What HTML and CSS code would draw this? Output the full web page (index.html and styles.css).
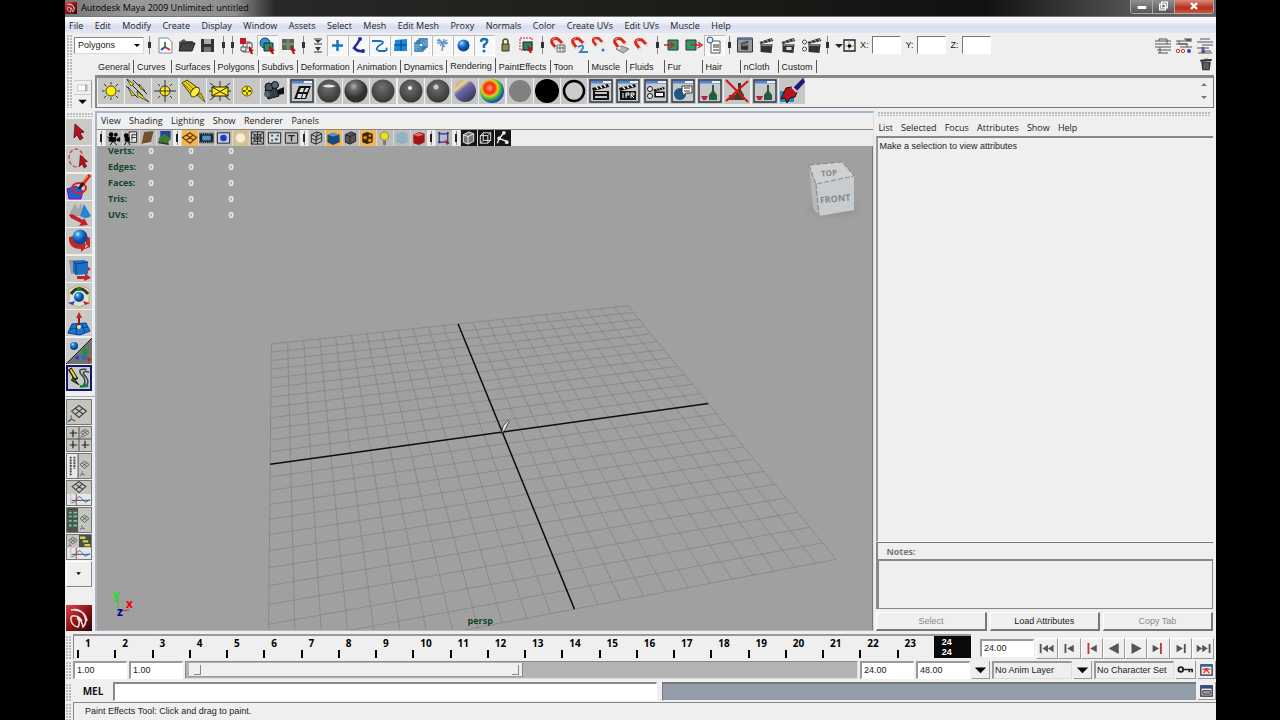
FILE: index.html
```html
<!DOCTYPE html>
<html lang="en">
<head>
<meta charset="utf-8">
<title>Autodesk Maya 2009 Unlimited: untitled</title>
<link rel="stylesheet" href="styles.css">
</head>
<body>
<svg class="defs" aria-hidden="true">
  <defs>
    <radialGradient id="gray" cx=".4" cy=".3"><stop offset="0" stop-color="#b5b5b5"/><stop offset=".35" stop-color="#6c6c6c"/><stop offset="1" stop-color="#303030"/></radialGradient>
    <radialGradient id="flat" cx=".45" cy=".35" r=".6"><stop offset="0" stop-color="#707070"/><stop offset="1" stop-color="#3a3a3a"/></radialGradient>
    <radialGradient id="blue" cx=".35" cy=".3"><stop offset="0" stop-color="#d8f2ff"/><stop offset=".35" stop-color="#3596e6"/><stop offset="1" stop-color="#084a98"/></radialGradient>
    <radialGradient id="rain" cx=".4" cy=".38" r=".62"><stop offset="0" stop-color="#ff9a5a"/><stop offset=".35" stop-color="#f02a1e"/><stop offset=".55" stop-color="#eacb1d"/><stop offset=".75" stop-color="#2bb741"/><stop offset="1" stop-color="#2238c8"/></radialGradient>
    <linearGradient id="ramp" x2=".8" y2="1"><stop offset="0" stop-color="#b75a5c"/><stop offset=".3" stop-color="#ead98c"/><stop offset=".45" stop-color="#6c6aa8"/><stop offset="1" stop-color="#30304e"/></linearGradient>
    <linearGradient id="maya" x2="1" y2="1"><stop offset="0" stop-color="#e0464b"/><stop offset=".5" stop-color="#8c1416"/><stop offset="1" stop-color="#2a0505"/></linearGradient>
  </defs>
  <symbol id="win" viewBox="0 0 26 26"><path d="M2 2h22v22H2z" fill="#c9c9c9" stroke="#2d3440" stroke-width="1.4"/><path d="M3 3h20v2.5H3z" fill="#4f86d8"/><path d="M15 3h8v2H15z" fill="#e6f0ff"/></symbol>
  <symbol id="clap" viewBox="0 0 26 26"><path d="M5 13h16v9H5zM4 10l16-4 1 3-16 4z" fill="#111"/><path d="M8 9l2 2M12 8l2 2M16 7l2 2" stroke="#fff" stroke-width="1.3"/></symbol>
  <symbol id="board" viewBox="0 0 21 21"><path d="M4 9h12l-1 9-11-1zM3 7l12-4 2 3L4 9z" fill="#333"/><path d="M6 6l2 2M10 5l2 2M14 4l1 2M5 10h10" stroke="#c4c4c4"/></symbol>
  <symbol id="magnet" viewBox="0 0 21 21"><path d="M8 13L4 8q-1-3 1-4t5 0l5 5" fill="none" stroke="#d92818" stroke-width="3"/><path d="M7 12l2 2M14 8l2 2" stroke="#e4e4e4" stroke-width="3"/><path d="M4 5l3-2" stroke="#ff9a80"/></symbol>
  <symbol id="grid3" viewBox="0 0 26 26"><path d="M5 12l8-6 8 6-8 7zM9 9l8 6M17 9l-8 6.500" fill="none" stroke="#3b3b33" stroke-width="1.200"/></symbol>
  <symbol id="axis" viewBox="0 0 10 10"><path d="M4 6V1" stroke="#2aa52a" stroke-width="1.500"/><path d="M4 6L0 9" stroke="#2346d0" stroke-width="1.500"/><path d="M4 6l5 2" stroke="#d02020" stroke-width="1.500"/></symbol>
  <symbol id="cube" viewBox="0 0 17 17"><path d="M3 5l6-3 5 2v8l-6 3-5-2zM3 5l5 2 6-3M8 7v8" fill="none" stroke="currentColor"/></symbol>
  <symbol id="cursor" viewBox="0 0 26 26"><path d="M9 5l9 8-4 1 3 5-3 2-3-5-3 3z" fill="#b3131a" stroke="#5d0a0d" stroke-width=".8"/></symbol>
  <symbol id="logo" viewBox="0 0 26 26"><path d="M0 0h26v26H0z" fill="url(#maya)"/><path d="M5 5q9-2 13 5 4 7-1 12-1-7-6-9 4 4 1 9-6-1-7-7-1-5 4-4 4 0 7 5M8 5q11 0 13 11" fill="none" stroke="#f5dcdc" stroke-width="1.500"/></symbol>
  <symbol id="curve" viewBox="0 0 26 12"><path d="M0 0h26v12H0z" fill="#e4e6ea"/><path d="M4 1v10" stroke="#888" stroke-dasharray="1 1"/><path d="M5 7h20" stroke="#444"/><path d="M10 0v12" stroke="#d22"/><path d="M5 10q4-1 6-5t5 0 4 4 5-3" fill="none" stroke="#3a6aa8"/></symbol>
</svg>

<div class="app">
  <header class="titlebar">
    <svg class="titlebar-logo"><use href="#logo"/></svg>
    <h1 class="titlebar-text">Autodesk Maya 2009 Unlimited: untitled</h1>
    <div class="winbtns">
      <button class="winbtn" aria-label="Minimize"><svg viewBox="0 0 22 13"><path d="M7 6h9v3H7z" fill="#fff"/></svg></button>
      <button class="winbtn" aria-label="Restore"><svg viewBox="0 0 22 13"><path d="M9 2h6v6h-6zM7 4h6v6H7z" fill="#777" stroke="#fff" stroke-width="1.300"/></svg></button>
      <button class="winbtn winbtn-close" aria-label="Close"><svg viewBox="0 0 38 13"><path d="M16 3l6 6M22 3l-6 6" stroke="#fff" stroke-width="2.400"/></svg></button>
    </div>
  </header>

  <nav class="menu menu-main"><div class="menu-items">
    <a href="#">File</a><a href="#">Edit</a><a href="#">Modify</a><a href="#">Create</a><a href="#">Display</a><a href="#">Window</a><a href="#">Assets</a><a href="#">Select</a><a href="#">Mesh</a><a href="#">Edit Mesh</a><a href="#">Proxy</a><a href="#">Normals</a><a href="#">Color</a><a href="#">Create UVs</a><a href="#">Edit UVs</a><a href="#">Muscle</a><a href="#">Help</a>
  </div></nav>

  <div class="status-line">
    <span class="dots"></span>
    <label class="combo"><select aria-label="Menu set"><option>Polygons</option></select></label>
    <span class="grip grip-l"></span>
    <button class="tool" aria-label="New scene"><svg viewBox="0 0 21 21"><path d="M4 3h9l4 4v11H4z" fill="#fff" stroke="#888"/><path d="M10 12V7" stroke="#22a822" stroke-width="2"/><path d="M10 12l-4 3" stroke="#2244dd" stroke-width="2"/><path d="M10 12l5 3" stroke="#d22" stroke-width="2"/></svg></button>
    <button class="tool" aria-label="Open scene"><svg viewBox="0 0 21 21"><path d="M3 16V7l5-3 2 2h7v3" fill="#555"/><path d="M3 16l3-8h13l-3 8z" fill="#444" stroke="#222"/></svg></button>
    <button class="tool" aria-label="Save scene"><svg viewBox="0 0 21 21"><path d="M4 4h13v13H4z" fill="#333"/><path d="M7 4h7v5H7z" fill="#aaa"/><path d="M7 12h7v5H7z" fill="#777"/></svg></button>
    <span class="grip grip-w"></span>
    <button class="tool" aria-label="Select by hierarchy"><svg viewBox="0 0 21 21"><path d="M4 3h6v6H4z" fill="#c31822"/><path d="M7 9v8h6M10 7h4v6" fill="none" stroke="#555"/><path d="M5 12h5v4H5zM11 8h5v5h-5z" fill="#e8e8e8" stroke="#555"/><path d="M13 11l5 5-2 0 1 3-2 0-2-3z" fill="#b11"/></svg></button>
    <button class="tool on" aria-label="Select by object"><svg viewBox="0 0 21 21"><circle cx="8" cy="8" r="5" fill="#3a8fd0" stroke="#145"/><path d="M7 8h9v8H7z" fill="#279069" stroke="#134"/><path d="M12 10l6 6h-2l1 3-2 0-3-4z" fill="#b11"/></svg></button>
    <button class="tool" aria-label="Select by component"><svg viewBox="0 0 21 21"><path d="M4 4h12v11H4z" fill="#5d665c"/><path d="M10 4v11M4 9h12" stroke="#a5b19f"/><path d="M8 8h4v4H8z" fill="#4fa34f"/><path d="M13 10l5 6h-2l1 3-2 0-2-4z" fill="#b11"/></svg></button>
    <span class="grip grip-s"></span>
    <button class="tool tool-s" aria-label="Collapse masks"><svg viewBox="0 0 19 21"><path d="M6 4h8M6 9h8M6 17h8" stroke="#333"/><path d="M7 5h6l-3 3zM7 12h6l-3 4z" fill="#333"/></svg></button>
    <button class="tool on" aria-label="Handles"><svg viewBox="0 0 21 21"><path d="M10.500 5v11M5 10.500h11" stroke="#1678c0" stroke-width="2.500"/></svg></button>
    <button class="tool on" aria-label="Joints"><svg viewBox="0 0 21 21"><path d="M12 4q-2 4-6 9 4 4 9 3" fill="none" stroke="#222c98" stroke-width="2.500"/><circle cx="12" cy="4" r="2" fill="#222c98"/><circle cx="15" cy="16" r="2" fill="#222c98"/></svg></button>
    <button class="tool on" aria-label="Curves"><svg viewBox="0 0 21 21"><path d="M3 6h8q6 1 0 4-6 4-1 6h6q3-1 1-3" fill="none" stroke="#1a6fb8" stroke-width="1.800"/></svg></button>
    <button class="tool on" aria-label="Surfaces"><svg viewBox="0 0 21 21"><path d="M5 5l12-1v12H4z" fill="#1d86d8"/><path d="M11 5v11M4 10h13" stroke="#0a4380"/></svg></button>
    <button class="tool on" aria-label="Deformers"><svg viewBox="0 0 21 21"><path d="M4 8h8v8H4zM8 4h8v8H8zM6 6h8v8H6z" fill="none" stroke="#1f6ea8" stroke-width="1.300"/></svg></button>
    <button class="tool on" aria-label="Dynamics"><svg viewBox="0 0 21 21"><path d="M5 5l10 4M5 8h11M7 4l6 8M12 4l-2 12M15 5l-7 6" stroke="#6a96c4" stroke-width="1.500"/></svg></button>
    <button class="tool on" aria-label="Rendering"><svg viewBox="0 0 21 21"><circle cx="10.500" cy="10.500" r="6" fill="url(#blue)"/></svg></button>
    <button class="tool on" aria-label="Miscellaneous"><svg viewBox="0 0 21 21"><path d="M7 7q0-3 3-3 4 0 3 3-1 2-3 3v3" fill="none" stroke="#1870b4" stroke-width="2.500"/><circle cx="10" cy="16" r="1.500" fill="#1870b4"/></svg></button>
    <button class="tool" aria-label="Lock selection"><svg viewBox="0 0 21 21"><path d="M8 10V7q0-3 2.500-3T13 7v3" fill="none" stroke="#555220" stroke-width="1.600"/><path d="M7 9h7v7H7z" fill="#8f8c3a" stroke="#333"/></svg></button>
    <button class="tool" aria-label="Highlight selection"><svg viewBox="0 0 21 21"><path d="M4 3h12v12H4z" fill="none" stroke="#c22" stroke-dasharray="2 1"/><path d="M7 7h9v8H7z" fill="#258b5e" stroke="#123"/><path d="M11 9l6 7h-2l1 2-2 0-2-3z" fill="#b11"/></svg></button>
    <span class="grip"></span>
    <button class="tool" aria-label="Snap to grids"><svg viewBox="0 0 21 21"><use href="#magnet"/><path d="M9 10h8v7H9zM12 10v7M15 10v7M9 13h8" fill="#eee" stroke="#555" stroke-width=".8"/></svg></button>
    <button class="tool" aria-label="Snap to curves"><svg viewBox="0 0 21 21"><use href="#magnet"/><path d="M9 12q6-3 5 1l-3 4h8" fill="none" stroke="#3a7fc4" stroke-width="1.800"/></svg></button>
    <button class="tool" aria-label="Snap to points"><svg viewBox="0 0 21 21"><use href="#magnet" width="18" height="18"/><circle cx="13" cy="15" r="1.500" fill="#2a78c8"/></svg></button>
    <button class="tool" aria-label="Snap to view planes"><svg viewBox="0 0 21 21"><path d="M5 14l6-3 7 3-6 4z" fill="#b4b4ac" stroke="#777"/><use href="#magnet"/></svg></button>
    <button class="tool" aria-label="Make live"><svg viewBox="0 0 21 21"><use href="#magnet" y="1"/></svg></button>
    <span class="grip grip-s"></span>
    <button class="tool" aria-label="Inputs"><svg viewBox="0 0 21 21"><path d="M6 5h10v10H6z" fill="#2c9a6a" stroke="#333"/><path d="M2 10h8M8 7l4 3-4 3" fill="none" stroke="#c22" stroke-width="1.500"/></svg></button>
    <button class="tool" aria-label="Outputs"><svg viewBox="0 0 21 21"><path d="M3 5h10v10H3z" fill="#2c9a6a" stroke="#333"/><path d="M8 10h9M15 7l4 3-4 3" fill="none" stroke="#c22" stroke-width="1.500"/></svg></button>
    <button class="tool on" aria-label="Construction history"><svg viewBox="0 0 21 21"><path d="M7 6h9v12H7z" fill="#fff" stroke="#555"/><path d="M9 10h6M9 12h6M9 15h6" stroke="#333"/><circle cx="6" cy="5" r="3" fill="#d8e8ff" stroke="#357"/></svg></button>
    <span class="grip grip-s"></span>
    <button class="tool tool-b" aria-label="Render view"><svg viewBox="0 0 21 21"><path d="M3 3h15v14H3z" fill="#999" stroke="#333"/><path d="M3 3h15v2H3z" fill="#4f72a8"/><use href="#board" x="4" y="4" width="13" height="13"/></svg></button>
    <button class="tool tool-b" aria-label="Render frame"><svg viewBox="0 0 21 21"><use href="#board"/></svg></button>
    <button class="tool tool-b" aria-label="IPR render"><svg viewBox="0 0 21 21"><use href="#board"/><path d="M8 12h5v3H8z" fill="#ddd"/></svg></button>
    <button class="tool tool-b" aria-label="Render settings"><svg viewBox="0 0 21 21"><use href="#board" x="4"/><circle cx="4" cy="7" r="2" fill="#fff" stroke="#444"/><circle cx="4" cy="14" r="2" fill="#fff" stroke="#444"/></svg></button>
    <span class="grip grip-l"></span>
    <button class="tool tool-w" aria-label="Input field mode"><svg viewBox="0 0 24 21"><path d="M1 9h8l-4 4z" fill="#222"/><path d="M10 5h11v11H10z" fill="none" stroke="#222" stroke-width="1.300"/><path d="M15 5v11M10 11h11" stroke="#888" stroke-width=".8"/><circle cx="15.500" cy="11" r="1.800"/></svg></button>
    <label class="coord">X: <input type="text"></label>
    <label class="coord">Y: <input type="text"></label>
    <label class="coord">Z: <input type="text"></label>
    <div class="status-right">
      <button class="tool" aria-label="Attribute editor"><svg viewBox="0 0 21 21"><path d="M2 6h16M2 9h16M2 12h16M4 15h14M5 18h10M6 6V4h8v5M7 12v6" fill="none" stroke="#555"/></svg></button>
      <button class="tool" aria-label="Tool settings"><svg viewBox="0 0 21 21"><path d="M10 4h8M2 6h16M2 9h12M6 12h12M5 6v3h8v3" fill="none" stroke="#555"/><path d="M12 5h5" stroke="#555" stroke-width="2"/><circle cx="4" cy="16" r="1.700" fill="none" stroke="#c33"/><circle cx="9" cy="16" r="1.700" fill="none" stroke="#c33"/><circle cx="15" cy="16" r="2" fill="#3644b8"/></svg></button>
      <button class="tool" aria-label="Channel box"><svg viewBox="0 0 21 21"><path d="M5 4h10M2 7h16M7 10h11M2 13h12M6 16h10M3 18h14" stroke="#555"/><path d="M8 12v6" stroke="#336cb8" stroke-width="3"/><path d="M7 17h3" stroke="#c22" stroke-width="2"/></svg></button>
    </div>
  </div>

  <div class="shelf-tabs">
    <span class="dots"></span>
    <div class="tabs" role="tablist">
      <button class="tab">General</button><button class="tab">Curves</button><button class="tab">Surfaces</button><button class="tab">Polygons</button><button class="tab">Subdivs</button><button class="tab">Deformation</button><button class="tab">Animation</button><button class="tab">Dynamics</button><button class="tab tab-on">Rendering</button><button class="tab">PaintEffects</button><button class="tab">Toon</button><button class="tab">Muscle</button><button class="tab">Fluids</button><button class="tab">Fur</button><button class="tab">Hair</button><button class="tab">nCloth</button><button class="tab">Custom</button>
    </div>
    <button class="trash" aria-label="Trash"><svg viewBox="0 0 14 16"><path d="M2 5h10l-1 9H3z" fill="#333"/><path d="M1 4h12M5 2h4M5 6v7M7 6v7M9 6v7" stroke="#888"/><path d="M1 4l12-1" stroke="#222" stroke-width="2"/></svg></button>
  </div>

  <div class="shelf-row">
    <div class="shelf-side">
      <span class="dots"></span>
      <div class="shelf-side-btns">
        <button aria-label="Shelf tabs"><svg viewBox="0 0 20 14"><path d="M4 4h12v7H4z" fill="#fff" stroke="#bbb"/><path d="M14 4v7" stroke="#555"/></svg></button>
        <button aria-label="Shelf menu"><svg viewBox="0 0 20 14"><path d="M5 5h10l-5 5z"/></svg></button>
      </div>
    </div>
    <div class="shelf">
      <div class="shelf-items">
        <button class="si" aria-label="Ambient light"><svg viewBox="0 0 26 26"><path d="M13 4v18M4 13h18M6 6l14 14M20 6L6 20" stroke="#333"/><circle cx="13" cy="13" r="6.500" fill="#c4c4c4"/><circle cx="13" cy="13" r="5" fill="#ffee10" stroke="#5a5200"/></svg></button>
        <button class="si" aria-label="Directional light"><svg viewBox="0 0 26 26"><path d="M2 2l16 16M8 2l14 14M1 8l12 12" stroke="#222"/><path d="M2 1l7 5-3 2zM12 13l12 11-11-6zM3 9l7 8-3 1zM14 6l6 7-5-3z" fill="#f4e41a" stroke="#333" stroke-width=".8"/></svg></button>
        <button class="si" aria-label="Point light"><svg viewBox="0 0 26 26"><circle cx="13" cy="13" r="5" fill="#ffee10" stroke="#333"/><path d="M13 2v22M2 13h22M6 6l2 2M20 6l-2 2M6 20l2-2M20 20l-2-2" stroke="#333"/></svg></button>
        <button class="si" aria-label="Spot light"><svg viewBox="0 0 26 26"><path d="M2 5l5-3 11 8-6 8z" fill="#e8cf22" stroke="#443c00"/><path d="M4 6l9 9M6 4l9 9" stroke="#8a7a00"/><ellipse cx="15" cy="14" rx="3.500" ry="5.500" transform="rotate(38 15 14)" fill="#ffef3a" stroke="#443c00"/><path d="M17 17l8 7-4-9z" fill="#d8a91d" stroke="#443c00" stroke-width=".7"/></svg></button>
        <button class="si" aria-label="Area light"><svg viewBox="0 0 26 26"><path d="M13 3v20M2 13h22M3 5l5 4M23 5l-5 4M3 22l5-4M23 22l-5-4" stroke="#333"/><path d="M5 9h16v9H5z" fill="#ffee10" stroke="#222"/><path d="M5 9l16 9M21 9L5 18" stroke="#222"/></svg></button>
        <button class="si" aria-label="Volume light"><svg viewBox="0 0 26 26"><circle cx="13" cy="13" r="5" fill="#ffee10" stroke="#665e00"/><path d="M13 9v3M13 14v3M9 13h3M14 13h3" stroke="#333" stroke-width="1.300"/></svg></button>
        <button class="si" aria-label="Camera"><svg viewBox="0 0 26 26"><path d="M4 12l11-2 3 8-11 3z" fill="#344048" stroke="#111"/><circle cx="8" cy="9" r="4" fill="#455660" stroke="#111"/><circle cx="14" cy="7" r="3.500" fill="#566872" stroke="#111"/><path d="M16 12l7-3v7l-6 1z" fill="#111"/><circle cx="6" cy="16" r="3" fill="#52636c"/></svg></button>
        <button class="si" aria-label="Hypershade"><svg viewBox="0 0 26 26"><use href="#win"/><path d="M10 8h12l-5 13H5z" fill="#111"/><path d="M12 10h3l-1 4h-4zM17 10h3l-2 4h-3zM9 16h4l-1 4H8zM14 16h3l-1 4h-3z" fill="#ddd"/></svg></button>
        <button class="si" aria-label="Anisotropic"><svg viewBox="0 0 26 26"><circle cx="13" cy="13" r="11.500" fill="url(#flat)"/><path d="M6 8q7-3 14 0-6 3-14 0" fill="#e4e4e4"/></svg></button>
        <button class="si" aria-label="Blinn"><svg viewBox="0 0 26 26"><circle cx="13" cy="13" r="11.500" fill="url(#gray)"/></svg></button>
        <button class="si" aria-label="Lambert"><svg viewBox="0 0 26 26"><circle cx="13" cy="13" r="11.500" fill="url(#flat)"/></svg></button>
        <button class="si" aria-label="Phong"><svg viewBox="0 0 26 26"><circle cx="13" cy="13" r="11.500" fill="url(#flat)"/><circle cx="12" cy="10" r="2" fill="#eee"/></svg></button>
        <button class="si" aria-label="Phong E"><svg viewBox="0 0 26 26"><circle cx="13" cy="13" r="11.500" fill="url(#flat)"/><circle cx="11" cy="9" r="2.500" fill="#ccc"/></svg></button>
        <button class="si" aria-label="Layered shader"><svg viewBox="0 0 26 26"><circle cx="13" cy="13" r="11" fill="url(#ramp)"/></svg></button>
        <button class="si" aria-label="Ramp shader"><svg viewBox="0 0 26 26"><circle cx="13" cy="13" r="12" fill="url(#rain)"/></svg></button>
        <button class="si" aria-label="Shading map"><svg viewBox="0 0 26 26"><circle cx="13" cy="13" r="11" fill="#808080"/></svg></button>
        <button class="si" aria-label="Surface shader"><svg viewBox="0 0 26 26"><circle cx="13" cy="13" r="12" fill="#000"/></svg></button>
        <button class="si" aria-label="Use background"><svg viewBox="0 0 26 26"><circle cx="13" cy="13" r="10" fill="#ccc" stroke="#000" stroke-width="2.500"/></svg></button>
        <button class="si" aria-label="Render current frame"><svg viewBox="0 0 26 26"><use href="#win"/><use href="#clap"/><path d="M7 15h12M7 19h12" stroke="#fff" stroke-width="1.500"/></svg></button>
        <button class="si" aria-label="IPR render"><svg viewBox="0 0 26 26"><use href="#win"/><use href="#clap"/><path d="M8 15v5M11 20v-5h3v2h-3M16 20v-5h3v2h-3l3 3" fill="none" stroke="#fff"/></svg></button>
        <button class="si" aria-label="Render options"><svg viewBox="0 0 26 26"><use href="#win"/><use href="#clap" x="8" y="4" width="17" height="19"/><circle cx="7" cy="11" r="2.500" fill="#eee" stroke="#111"/><circle cx="7" cy="18" r="2.500" fill="#eee" stroke="#111"/><path d="M13 15h7v3h-7z" fill="#fff"/></svg></button>
        <button class="si" aria-label="Shading help"><svg viewBox="0 0 26 26"><use href="#win"/><circle cx="10" cy="16" r="6" fill="#175a88"/><path d="M12 8h10v7h-6l-3 3v-3h-1z" fill="#fff" stroke="#333"/><path d="M14 10h6M14 13h6" stroke="#333"/></svg></button>
        <button class="si" aria-label="Batch render"><svg viewBox="0 0 26 26"><use href="#win"/><path d="M15 7h2v6l3 4v5h-8v-5l3-4z" fill="#245c3e"/><path d="M4 18h7l-2 4H6z" fill="#b72330"/></svg></button>
        <button class="si" aria-label="Cancel batch render"><svg viewBox="0 0 26 26"><path d="M14 5h3v7l3 5v5h-9v-5l3-5z" fill="#3c3e22"/><path d="M5 17h6v5H5z" fill="#733"/><path d="M2 2l22 22M24 3L2 23" stroke="#d01616" stroke-width="2.200"/></svg></button>
        <button class="si" aria-label="Show batch render"><svg viewBox="0 0 26 26"><use href="#win"/><path d="M15 7h2v6l3 4v5h-8v-5l3-4z" fill="#245c3e"/><path d="M4 18h7l-2 4H6z" fill="#b72330"/></svg></button>
        <button class="si" aria-label="3D paint tool"><svg viewBox="0 0 26 26"><path d="M1 13h14v11H1z" fill="#178dc9"/><path d="M24 0L14 10l3 4L26 4z" fill="#24156e"/><path d="M7 10l6-1 5 5-2 5-5 1-3 5-2-5-4 1z" fill="#b7151b" stroke="#300"/><path d="M13 9l5 5" stroke="#ccd" stroke-width="2"/></svg></button>
      </div>
      <div class="shelf-scroll"><svg viewBox="0 0 12 26"><path d="M3 8h6L6 5zM3 18h6l-3 3z" fill="#777"/></svg></div>
    </div>
  </div>

  <main class="workspace">
    <aside class="toolbox">
      <span class="dots-h"></span>
      <div class="tools">
        <button class="tb" aria-label="Select"><svg viewBox="0 0 26 26"><use href="#cursor"/></svg></button>
        <button class="tb" aria-label="Lasso"><svg viewBox="0 0 26 26"><ellipse cx="10" cy="12" rx="7" ry="9" fill="none" stroke="#d0506a" stroke-width="1.500" stroke-dasharray="4 2"/><use href="#cursor" x="7" y="5" width="21" height="21"/></svg></button>
        <button class="tb" aria-label="Paint selection"><svg viewBox="0 0 26 26"><path d="M1 15l9-3 7 5-2 8H3z" fill="#1f62c8" stroke="#90c"/><ellipse cx="13" cy="14" rx="7" ry="5" fill="none" stroke="#d22" stroke-width="2"/><path d="M24 1L15 12" stroke="#d8281e" stroke-width="3.500"/><path d="M17 9l-4 6" stroke="#222" stroke-width="3"/><path d="M22 2l-5 6" stroke="#ff9a30"/></svg></button>
        <button class="tb" aria-label="Move"><svg viewBox="0 0 26 26"><path d="M4 12L9 2l6 13H3zM10 13l5-11 4 13z" fill="#a4a8a8"/><path d="M18 3l7 12q-5 4-11 0z" fill="#2486cc"/><path d="M3 14l3-1 11 6 1-2 4 7-9 1 2-3-10-5z" fill="#c8202a"/></svg></button>
        <button class="tb" aria-label="Rotate"><svg viewBox="0 0 26 26"><path d="M3 9q-1 12 12 12v3l7-6-6-5v3Q8 17 8 8zM20 8l4 2v9l-5 2 1-6z" fill="#c8252a"/><circle cx="14" cy="9" r="7.500" fill="url(#blue)"/></svg></button>
        <button class="tb" aria-label="Scale"><svg viewBox="0 0 26 26"><path d="M3 4h13l2 14H5z" fill="#999"/><path d="M7 5l11-1 4 2v12l-12 1-3-3z" fill="#1a70c2"/><path d="M7 5l3 3 12-2M10 8v11" stroke="#0a3e80" fill="none"/><path d="M11 20h8v-3l6 5-7 3v-2h-7zM21 10l4 3-3 2z" fill="#c8252a"/></svg></button>
        <button class="tb" aria-label="Universal manipulator"><svg viewBox="0 0 26 26"><path d="M3 6l10-4 10 4v14l-10 4-10-4z" fill="#e0e2d8" stroke="#b9b960"/><path d="M5 11q8-11 17 0" fill="none" stroke="#333" stroke-width="3"/><circle cx="13" cy="14" r="5" fill="url(#blue)"/><path d="M13 3l3 5h-6z" fill="#178a2a"/><path d="M2 20l7-2-2 4z" fill="#2040c8"/><path d="M24 20l-7-2 2 4z" fill="#c22"/></svg></button>
        <button class="tb" aria-label="Soft modification"><svg viewBox="0 0 26 26"><path d="M2 23l4-9 14-1 4 8-10 4z" fill="#1779d4" stroke="#0a3b8c"/><path d="M4 19l18-2M11 14l-1 10M16 14l3 9" stroke="#0a3b8c"/><path d="M13 17V8" stroke="#8a1a1a" stroke-width="2"/><path d="M13 2l3 6h-6z" fill="#c22"/><circle cx="13" cy="17" r="2" fill="#ffe46a"/></svg></button>
        <button class="tb" aria-label="Show manipulator"><svg viewBox="0 0 26 26"><path d="M26 0v26H0z" fill="#707470"/><path d="M26 0L0 26" stroke="#222"/><circle cx="8" cy="8" r="4" fill="url(#blue)"/><path d="M19 9l4 6h-2v4h-4v-4h-2z" fill="#22922c"/><path d="M8 20l5-3v5z" fill="#2346d0"/><path d="M21 19l5 2-4 4z" fill="#c22"/><circle cx="18" cy="19" r="3" fill="#2a6fbe"/></svg></button>
        <button class="tb tb-on" aria-label="Paint Effects"><svg viewBox="0 0 26 26"><path d="M2 2l8 13" stroke="#1b1b1b" stroke-width="5"/><path d="M3 3l6 10" stroke="#e8d820" stroke-width="2.500"/><path d="M6 12l7 9-9-5z" fill="#1f6a2a" stroke="#111"/><path d="M22 3q-11-2-7 5 9 9 2 15M25 6q-9-2-6 3 8 8 2 13" fill="none" stroke="#314c4c" stroke-width="1.800"/><path d="M14 23l10-1" stroke="#1a7a4a" stroke-width="3"/></svg></button>
      </div>
      <div class="layouts">
        <button class="lb" aria-label="Single perspective"><svg viewBox="0 0 26 26"><use href="#grid3"/><use href="#axis" x="1" y="15" width="9" height="10"/></svg></button>
        <button class="lb" aria-label="Four view"><svg viewBox="0 0 26 26"><path d="M13 0v26M0 13h26" stroke="#444"/><path d="M6.500 3v8M3 6.500h8M6.500 15v8M3 19.500h8M19.500 15v8M16 19.500h8" stroke="#222" stroke-width="1.300"/><use href="#grid3" x="12" y="-1" width="15" height="15"/><use href="#axis" x="14" y="7" width="5" height="5"/></svg></button>
        <button class="lb" aria-label="Persp/Outliner"><svg viewBox="0 0 26 26"><path d="M0 0h12v26H0z" fill="#e8e8e8"/><path d="M12 0v26" stroke="#444"/><path d="M4 3v20M8 3v13" stroke="#444" stroke-width="2" stroke-dasharray="2 1"/><use href="#grid3" x="11" y="4" width="16" height="16"/><use href="#axis" x="14" y="18" width="6" height="6"/></svg></button>
        <button class="lb" aria-label="Persp/Graph"><svg viewBox="0 0 26 26"><use href="#grid3" x="1" y="-5" width="24" height="24"/><use href="#curve" y="14" width="26" height="12"/></svg></button>
        <button class="lb" aria-label="Hypershade/Persp"><svg viewBox="0 0 26 26"><path d="M0 0h12v26H0z" fill="#4d544d"/><path d="M2 5h3M2 9h3M2 14h3M2 19h3M7 5h4M7 9h4M7 14h4M7 19h4" stroke="#79c69a" stroke-width="2"/><use href="#grid3" x="11" y="4" width="16" height="16"/><use href="#axis" x="14" y="18" width="6" height="6"/></svg></button>
        <button class="lb" aria-label="Persp/Graph/Hypergraph"><svg viewBox="0 0 26 26"><path d="M13 0h13v13H13z" fill="#474c44"/><path d="M14 3h6M17 7h6M19 11h6" stroke="#d8d04a" stroke-width="2.500"/><use href="#grid3" x="-1" y="-1" width="15" height="15"/><use href="#axis" x="1" y="8" width="5" height="5"/><use href="#curve" y="14" width="26" height="12"/></svg></button>
        <button class="lb lb-menu" aria-label="More layouts"><svg viewBox="0 0 26 26"><path d="M10 11h5l-2.500 3z"/></svg></button>
      </div>
      <svg class="toolbox-logo"><use href="#logo"/></svg>
    </aside>

    <section class="panel">
      <nav class="menu menu-panel"><div class="menu-items"><a href="#">View</a><a href="#">Shading</a><a href="#">Lighting</a><a href="#">Show</a><a href="#">Renderer</a><a href="#">Panels</a></div></nav>
      <div class="panel-tools">
        <span class="pgrip"></span>
        <button class="pt" aria-label="Select camera"><svg viewBox="0 0 17 17"><circle cx="6" cy="5" r="2.500"/><circle cx="11" cy="5" r="2"/><path d="M4 8h7v4H4zM12 10l3-2v4l-3-1M8 12l-3 4M8 12l4 4M2 7l2 2" stroke="#000"/></svg></button>
        <button class="pt" aria-label="Camera attributes"><svg viewBox="0 0 17 17"><path d="M7 2h8v11H7z" fill="#e8e8e8" stroke="#222"/><path d="M10 5h5M10 5v6M10 8h4" stroke="#222"/><circle cx="4" cy="6" r="2.500"/><path d="M3 8h4v4H3zM4 13l-2 3M6 13l2 3" stroke="#000"/></svg></button>
        <button class="pt" aria-label="Bookmarks"><svg viewBox="0 0 17 17"><path d="M5 2l10-1-3 12-10 2z" fill="#76502e"/><path d="M2 15l10-2 1 2-9 1z" fill="#ddd2bc"/></svg></button>
        <button class="pt" aria-label="Image plane"><svg viewBox="0 0 17 17"><path d="M4 1h11v9H4z" fill="#2b3f9a"/><path d="M3 8l6-4 6 5-3 5-10-2z" fill="#34832c"/><path d="M2 12l11 2v2L2 14z" fill="#333"/></svg></button>
        <span class="pgrip"></span>
        <button class="pt pt-hot" aria-label="Grid"><svg viewBox="0 0 17 17"><path d="M1 8l8-5 7 5-7 6zM5 5l8 6M13 5l-8 6" fill="none" stroke="#6b3f00" stroke-width="1.300"/></svg></button>
        <button class="pt" aria-label="Film gate"><svg viewBox="0 0 17 17"><path d="M1 3h15v11H1z" fill="#17242e"/><path d="M4 6h9v5H4z" fill="#4f93c6"/><path d="M2 4h13M2 13h13" stroke="#ccc" stroke-dasharray="1 1"/></svg></button>
        <button class="pt" aria-label="Resolution gate"><svg viewBox="0 0 17 17"><path d="M2 3h13v11H2z" fill="#bcd0ea" stroke="#222"/><circle cx="8.500" cy="8.500" r="3.500" fill="#223ec0"/></svg></button>
        <button class="pt pt-pale" aria-label="Gate mask"><svg viewBox="0 0 17 17"><circle cx="8.500" cy="8.500" r="5" fill="#f8eed2"/></svg></button>
        <button class="pt" aria-label="Field chart"><svg viewBox="0 0 17 17"><path d="M2 2h13v13H2zM2 2l13 13M15 2L2 15M8.500 2v13M2 8.500h13M5 5h7v7H5z" fill="none" stroke="#222"/></svg></button>
        <button class="pt" aria-label="Safe action"><svg viewBox="0 0 17 17"><path d="M2 3h13v11H2z" fill="#d5dbe0" stroke="#222"/><path d="M5 6h2M9 10h3M11 6h2M5 11h2" stroke="#254f7e" stroke-width="2"/></svg></button>
        <button class="pt" aria-label="Safe title"><svg viewBox="0 0 17 17"><path d="M2 3h13v11H2z" fill="#bbb" stroke="#222"/><path d="M5 6h7M8.500 6v6" stroke="#222" stroke-width="1.500"/></svg></button>
        <span class="pgrip"></span>
        <button class="pt" aria-label="Wireframe"><svg viewBox="0 0 17 17"><use href="#cube"/><path d="M3 9l5 2 6-3M9 2v8" stroke="#333" fill="none"/></svg></button>
        <button class="pt pt-hot" aria-label="Smooth shade"><svg viewBox="0 0 17 17"><path d="M2 5l6-2 7 2v8l-7 3-6-3z" fill="#174a7e"/><path d="M2 5l6-2 7 2-7 2z" fill="#4b9ad0"/></svg></button>
        <button class="pt" aria-label="Wire on shaded"><svg viewBox="0 0 17 17"><path d="M3 5l6-3 5 2v8l-6 3-5-2z" fill="#555"/><use href="#cube"/></svg></button>
        <button class="pt pt-hot" aria-label="Textured"><svg viewBox="0 0 17 17"><path d="M3 4l5-2 6 2v9l-6 2-5-2z" fill="#3a2408"/><circle cx="6" cy="8" r="2" fill="#d08a20"/><circle cx="11" cy="6" r="1.500" fill="#d08a20"/><circle cx="11" cy="11" r="2" fill="#d08a20"/></svg></button>
        <button class="pt" aria-label="Lights"><svg viewBox="0 0 17 17"><circle cx="8.500" cy="6.500" r="4.500" fill="#e6e028" stroke="#8a8510"/><path d="M7 11h3v5H7z" fill="#777"/></svg></button>
        <button class="pt" aria-label="Shadows"><svg viewBox="0 0 17 17"><path d="M3 4l6-2 6 2v9l-6 2-6-2z" fill="#8fb3c4"/></svg></button>
        <button class="pt" aria-label="High quality"><svg viewBox="0 0 17 17"><path d="M3 5l6-3 6 2v9l-6 3-6-2z" fill="#a31414"/><path d="M3 5l6-2 5 2-6 2z" fill="#e07070"/></svg></button>
        <span class="pgrip"></span>
        <button class="pt" aria-label="Isolate select"><svg viewBox="0 0 17 17"><path d="M4 4h9v9H4z" fill="none" stroke="#2430a0" stroke-width="1.300"/><path d="M3 3h2M12 3h2M3 13h2" stroke="#2430a0" stroke-width="2"/><path d="M10 10l5 4-3 2z" fill="#b11"/></svg></button>
        <span class="pgrip"></span>
        <button class="pt pt-dark" aria-label="X-ray"><svg viewBox="0 0 17 17"><path d="M3 5l6-3 5 2v8l-6 3-5-2z" fill="#777"/><use href="#cube"/></svg></button>
        <button class="pt pt-dark" aria-label="X-ray components"><svg viewBox="0 0 17 17"><path d="M3 6h8v8H3zM6 3h8v8H6zM3 6l3-3M11 6l3-3M11 14l3-3M3 14l3-3" fill="none" stroke="#eee"/></svg></button>
        <button class="pt pt-dark" aria-label="X-ray joints"><svg viewBox="0 0 17 17"><path d="M10 3L5 9l8 3M5 9l-2 5" fill="none" stroke="#eee" stroke-width="1.500"/><circle cx="10" cy="3" r="2" fill="#eee"/><circle cx="5" cy="9" r="2" fill="#eee"/><circle cx="13" cy="13" r="2" fill="#eee"/></svg></button>
      </div>
      <div class="viewport">
        <svg class="scene" viewBox="98 146 775 485" preserveAspectRatio="xMidYMid slice">
          <path id="grid-lines" class="grid-lines"/>
          <path id="grid-axes" class="grid-axes"/>
          <path d="M502 434l2-8 5-5 1 1-4 8z" fill="#ddd" stroke="#222" stroke-width=".8"/>
        </svg>
        <table class="stats">
          <tr><th>Verts:</th><td>0</td><td>0</td><td>0</td></tr>
          <tr><th>Edges:</th><td>0</td><td>0</td><td>0</td></tr>
          <tr><th>Faces:</th><td>0</td><td>0</td><td>0</td></tr>
          <tr><th>Tris:</th><td>0</td><td>0</td><td>0</td></tr>
          <tr><th>UVs:</th><td>0</td><td>0</td><td>0</td></tr>
        </table>
        <svg class="viewcube" viewBox="0 0 60 66">
          <ellipse cx="30" cy="56" rx="24" ry="5" class="cube-shadow"/>
          <path d="M6 12l7 19 3 32-6-8z" fill="#b6b8ba"/>
          <path d="M6 12l33-3 13 15-39 8z" fill="#ced0d2"/>
          <path d="M13 31l38-8v34l-35 6z" fill="#c8cccf"/>
          <path d="M6 12l33-3 12 14-38 8zM13 31l3 32" class="cube-edge"/>
          <text x="26" y="23" class="cube-text cube-top" text-anchor="middle" transform="rotate(-4 26 20)">TOP</text>
          <text x="32" y="49" class="cube-text" text-anchor="middle" transform="rotate(-6 32 45)">FRONT</text>
        </svg>
        <svg class="axes" viewBox="0 0 32 32">
          <path d="M9 24V10" stroke="#3c3"/><path d="M10 22l10-1" stroke="#c33"/>
          <text x="4" y="10" fill="#1ee01e">y</text><text x="17" y="19" fill="#e00">x</text><text x="8" y="27" fill="#00a">z</text>
        </svg>
        <span class="camera-name">persp</span>
      </div>
    </section>

    <section class="attrs">
      <span class="dots-h"></span>
      <nav class="menu menu-attrs"><div class="menu-items"><a href="#">List</a><a href="#">Selected</a><a href="#">Focus</a><a href="#">Attributes</a><a href="#">Show</a><a href="#">Help</a></div></nav>
      <div class="attrs-body">Make a selection to view attributes</div>
      <label class="notes-label" for="notes">Notes:</label>
      <textarea id="notes" class="notes"></textarea>
      <div class="attrs-btns"><button disabled>Select</button><button>Load Attributes</button><button disabled>Copy Tab</button></div>
    </section>
  </main>

  <div class="row row-time">
    <span class="dots"></span>
    <ol class="timeline">
      <li>1</li><li>2</li><li>3</li><li>4</li><li>5</li><li>6</li><li>7</li><li>8</li><li>9</li><li>10</li><li>11</li><li>12</li><li>13</li><li>14</li><li>15</li><li>16</li><li>17</li><li>18</li><li>19</li><li>20</li><li>21</li><li>22</li><li>23</li><li class="now"><span>24</span><span>24</span></li>
    </ol>
    <div class="transport">
      <input class="field" type="text" value="24.00" aria-label="Current time">
      <div class="play">
        <button aria-label="Go to start"><svg viewBox="0 0 22 20"><path d="M3 5h2v10H3zM6 10l6-4v8zM12 10l6-4v8z"/></svg></button>
        <button aria-label="Step back frame"><svg viewBox="0 0 22 20"><path d="M6 5h2v10H6zM9 10l7-4v8z"/></svg></button>
        <button aria-label="Step back key"><svg viewBox="0 0 22 20"><path d="M6 4h2v12H6z" class="key"/><path d="M9 10l7-4v8z"/></svg></button>
        <button aria-label="Play backwards"><svg viewBox="0 0 22 20"><path d="M5 10l11-6v12z"/></svg></button>
        <button aria-label="Play forwards"><svg viewBox="0 0 22 20"><path d="M17 10L6 4v12z"/></svg></button>
        <button aria-label="Step forward key"><svg viewBox="0 0 22 20"><path d="M13 4h2v12h-2z" class="key"/><path d="M12 10L5 6v8z"/></svg></button>
        <button aria-label="Step forward frame"><svg viewBox="0 0 22 20"><path d="M14 5h2v10h-2zM13 10L6 6v8z"/></svg></button>
        <button aria-label="Go to end"><svg viewBox="0 0 22 20"><path d="M17 5h2v10h-2zM16 10l-6-4v8zM10 10L4 6v8z"/></svg></button>
      </div>
    </div>
  </div>

  <div class="row row-range">
    <span class="dots"></span>
    <input class="field" type="text" value="1.00" aria-label="Animation start">
    <input class="field" type="text" value="1.00" aria-label="Playback start">
    <div class="range"><div class="range-bar"><span></span><span></span></div></div>
    <input class="field" type="text" value="24.00" aria-label="Playback end">
    <input class="field" type="text" value="48.00" aria-label="Animation end">
    <button class="drop" aria-label="Layer menu"><svg viewBox="0 0 18 18"><path d="M3 7h12l-6 6z"/></svg></button>
    <select class="set" aria-label="Animation layer"><option>No Anim Layer</option></select>
    <button class="drop" aria-label="Character menu"><svg viewBox="0 0 18 18"><path d="M3 7h12l-6 6z"/></svg></button>
    <select class="set" aria-label="Character set"><option>No Character Set</option></select>
    <button class="drop drop-w" aria-label="Auto key"><svg viewBox="0 0 20 18"><circle cx="5" cy="9" r="2.500" fill="none" stroke="#222" stroke-width="2"/><path d="M7 9h10v3M14 9v3" fill="none" stroke="#222" stroke-width="1.800"/></svg></button>
    <button class="drop" aria-label="Preferences"><svg viewBox="0 0 18 18"><path d="M3 4h12v11H3z" fill="#f4e0e0" stroke="#234" stroke-width="1.300"/><path d="M3 4h12v2H3z" fill="#2d61b0"/><path d="M5 9l4-1 4 1M9 8l-3 5M9 9l3 4" stroke="#c33" fill="none" stroke-width="1.300"/></svg></button>
  </div>

  <div class="row row-mel">
    <span class="dots"></span>
    <label class="mel-label" for="mel">MEL</label>
    <input id="mel" class="mel-input" type="text">
    <output class="mel-output"></output>
    <button class="drop" aria-label="Script editor"><svg viewBox="0 0 18 18"><path d="M3 4h12v11H3z" fill="#eee" stroke="#223" stroke-width="1.300"/><path d="M3 4h12v3H3z" fill="#2d4d86"/><path d="M5 9h8v4H5z" fill="#999" stroke="#444"/></svg></button>
  </div>

  <footer class="row row-help">
    <span class="dots"></span>
    <p class="help">Paint Effects Tool: Click and drag to paint.</p>
  </footer>
</div>
<script src="script.js"></script>
</body>
</html>
```
FILE: styles.css
```css
* { box-sizing: border-box; }
body {
  margin: 0;
  background: #000;
  color: #1c1c1c;
  font: 9px/12px "Liberation Sans", Roboto, sans-serif;
}
button, input, select, textarea { font: inherit; color: inherit; margin: 0; padding: 0; border: 0; background: none; border-radius: 0; }
button svg { display: block; width: 100%; height: 100%; }
a { color: inherit; text-decoration: none; }
.defs { position: absolute; width: 0; height: 0; }

.app {
  display: flex;
  flex-direction: column;
  min-height: 100vh;
  margin: 0 64px 0 65px;
  background: #efefef;
}

.titlebar {
  display: flex;
  align-items: center;
  height: 17px;
  border-bottom: 1px solid #777;
  background: linear-gradient(90deg, #777 0, #9a9a9a 70px, #8e8e8e 170px, #292826 210px, #1b1a17 60%, #111 80%, #555 93%, #666);
}
.titlebar-logo { width: 12px; height: 12px; }
.titlebar-text { flex: 1; margin: 0 0 0 4px; font: 9px/14px "Open Sans", "Noto Sans", sans-serif; color: #000; }
.winbtns { display: flex; align-self: flex-start; margin-right: 2px; border: 1px solid #aaa; border-top: 0; border-radius: 0 0 4px 4px; overflow: hidden; }
.winbtn { width: 22px; height: 13px; background: linear-gradient(#8f8f8f, #555); border-right: 1px solid #aaa; }
.winbtn-close { width: 38px; background: linear-gradient(#d98a7a, #b5301c 60%, #d0553c); border: 0; }

.menu { display: flex; align-items: center; font: 9px/14px "Open Sans", "Noto Sans", sans-serif; }
.menu-items { display: flex; justify-content: space-between; white-space: nowrap; }
.menu-main { height: 16px; padding: 1px 0 0 4px; background: linear-gradient(#fdfdff, #e8ebf8 45%, #d9def0 55%, #e2e6f4); }
.menu-main .menu-items { width: 662px; }
.dots { flex: none; width: 5px; align-self: stretch; margin: 2px 2px 0 2px; background: radial-gradient(circle at 1px 1px, #bbb 0 1px, transparent 1px) 0 0 / 3px 3px; }
.dots-h { flex: none; height: 4px; margin: 1px 2px; background: radial-gradient(circle at 1px 1px, #bbb 0 1px, transparent 1px) 0 0 / 3px 3px; }

.status-line { display: flex; align-items: center; height: 24px; }
.combo { position: relative; width: 70px; height: 17px; border: 1px solid #888; border-right-color: #ddd; border-bottom-color: #ddd; background: #fff; }
.combo select { width: 100%; height: 100%; padding-left: 3px; appearance: none; }
.combo::after { content: ""; position: absolute; right: 3px; top: 6px; border: 3px solid transparent; border-top-color: #000; pointer-events: none; }
.tool { flex: none; width: 21px; height: 21px; }
.tool-s { width: 19px; }
.tool-b { width: 22px; }
.tool-w { width: 26px; }
.tool.on { background: #f7f7f7; box-shadow: inset 1px 1px #bbb, inset -1px -1px #fff; }
.grip { flex: none; width: 11px; height: 20px; background: linear-gradient(#333, #333) 50% 50% / 3px 6px no-repeat, linear-gradient(#888, #888) 50% 50% / 1px 18px no-repeat; }
.grip-s { width: 9px; }
.grip-w { width: 18px; background: linear-gradient(#333, #333) 4px 50% / 3px 6px no-repeat, linear-gradient(#333, #333) 13px 50% / 3px 6px no-repeat, linear-gradient(#888, #888) 5px 50% / 1px 18px no-repeat, linear-gradient(#888, #888) 14px 50% / 1px 18px no-repeat; }
.coord { display: flex; align-items: center; gap: 3px; margin-left: 1px; }
.coord input { width: 29px; height: 18px; margin-right: 4px; border: 1px solid #fff; border-top-color: #777; border-left-color: #777; background: #fff; }
.status-right { display: flex; margin-left: auto; }

.shelf-tabs { display: flex; align-items: flex-start; height: 18px; }
.tabs { display: flex; align-items: flex-end; flex: 1; height: 16px; padding-left: 21px; }
.tab { min-width: 38px; height: 13px; padding: 0 3px; border-right: 1px solid #555; text-align: left; white-space: nowrap; }
.tab-on { height: 15px; }
.trash { width: 14px; height: 15px; margin-right: 3px; }

.shelf-row { display: flex; height: 33px; margin-bottom: 1px; }
.shelf-side { display: flex; flex: none; width: 30px; }
.shelf-side-btns { display: flex; flex-direction: column; justify-content: center; padding-top: 4px; }
.shelf-side-btns button { width: 18px; height: 14px; border-right: 1px solid #999; border-top: 1px solid #ccc; }
.shelf { flex: 1; display: flex; align-items: flex-start; justify-content: space-between; margin-right: 2px; border: 1px solid #777; border-top: 3px solid #888; border-left: 2px solid #888; }
.shelf-items { display: flex; justify-content: space-between; width: 708px; padding-left: 1px; }
.si { width: 26px; height: 26px; background: #c6c6c6; }
.shelf-scroll { width: 12px; height: 26px; margin-right: 3px; }

.workspace { display: flex; flex: 1; margin-top: 2px; }
.toolbox { display: flex; flex-direction: column; flex: none; width: 30px; }
.toolbox .dots-h { height: 4px; margin: 2px 2px; }
.tools { display: flex; flex-direction: column; justify-content: space-between; height: 272px; padding-left: 1px; }
.tb { width: 26px; height: 26px; background: #c9c9c7; }
.tb-on { border: 2px solid #15156c; }
.layouts { display: flex; flex-direction: column; justify-content: space-between; height: 191px; margin-top: 5px; padding: 2px 0 0 1px; border-top: 1px solid #aaa; }
.lb { width: 26px; height: 26px; border: 1px solid #777; background: #c5c5c0; }
.lb-menu { border-color: #fff #888 #888 #fff; background: #efefef; }
.toolbox-logo { width: 26px; height: 26px; margin: auto 0 0 1px; }

.panel { flex: 782; display: flex; flex-direction: column; min-width: 0; border: 2px solid #a3b7ca; border-right: 1px solid #ddd; border-bottom-width: 1px; }
.menu-panel { height: 17px; padding-left: 4px; border-bottom: 1px solid #888; }
.menu-panel .menu-items { width: 218px; }
.panel-tools { display: flex; align-items: center; height: 16px; background: #ededed; }
.pgrip { flex: none; width: 8px; height: 14px; background: linear-gradient(#222, #222) 50% 50% / 2px 8px no-repeat, linear-gradient(#888, #888) 50% 50% / 1px 14px no-repeat; }
.pt { flex: none; width: 17px; height: 16px; background: #bdbdbd; color: #222; box-shadow: inset 1px 0 #d8d8d8; }
.pt-hot { background: #f3b453; }
.pt-pale { background: #d4c296; }
.pt-dark { background: #151515; color: #eee; }

.viewport { position: relative; flex: 1; overflow: hidden; background: #a0a0a0; border-right: 1px solid #777; }
.scene { position: absolute; inset: 0; width: 100%; height: 100%; }
.grid-lines { fill: none; stroke: #858585; stroke-width: .8px; }
.grid-axes { fill: none; stroke: #0c0c0c; stroke-width: 1.5px; }
.stats { position: absolute; left: 11px; top: -3px; border-collapse: collapse; font: bold 9px/16px "Open Sans", "Noto Sans", sans-serif; }
.stats th { min-width: 28px; padding: 0; text-align: left; color: #0f4528; }
.stats td { min-width: 30px; padding: 0; text-align: center; color: #f2f2f2; }
.stats td:nth-child(3) { min-width: 50px; }
.viewcube { position: absolute; right: 9px; top: 7px; width: 60px; height: 66px; }
.cube-shadow { fill: #808080; opacity: .6; filter: blur(4px); }
.cube-edge { fill: none; stroke: #777; stroke-width: .8px; stroke-dasharray: 5 2; }
.cube-text { font: bold 9px "Open Sans", sans-serif; fill: #85898c; }
.cube-top { font-size: 8px; }
.axes { position: absolute; left: 12px; bottom: 9px; width: 32px; height: 32px; font: bold 12px "Open Sans", sans-serif; }
.camera-name { position: absolute; left: 0; right: 9px; bottom: 3px; text-align: center; font: bold 9px/12px "Open Sans", sans-serif; color: #0f4528; }

.attrs { flex: 339; display: flex; flex-direction: column; min-width: 0; padding: 0 3px 0 2px; }
.menu-attrs { height: 19px; padding: 3px 0 0 2px; }
.menu-attrs .menu-items { width: 199px; }
.attrs-body { flex: 1; padding: 2px 1px; border-top: 2px solid #888; border-left: 2px solid #999; border-bottom: 1px solid #fff; }
.notes-label { padding: 3px 8px 1px; border-top: 1px solid #777; border-left: 2px solid #888; color: #777; font: bold 9px/12px "Open Sans", sans-serif; }
.notes { height: 50px; border: 1px solid #888; border-top: 2px solid #888; border-left: 3px solid #888; resize: none; }
.attrs-btns { display: flex; gap: 3px; padding-top: 3px; }
.attrs-btns button { flex: 1; height: 19px; border: 1px solid #fff; border-right: 2px solid #777; border-bottom: 2px solid #777; }
.attrs-btns button:disabled { color: #8a8a8a; }

.row { display: flex; }
.row > .dots { margin-left: 1px; width: 6px; margin-right: 1px; }
.row-time { height: 25px; margin-top: 3px; align-items: stretch; }
.timeline { flex: 1; display: grid; grid-template-columns: repeat(24, 1fr); margin: 0; padding: 0 0 0 3px; list-style: none; border-top: 2px solid #999; border-left: 1px solid #888; font: bold 10px/14px "Open Sans", "Noto Sans", sans-serif; color: #000; }
.timeline li { padding-left: 8px; background: linear-gradient(#000, #000) 0 100% / 2px 8px no-repeat; margin-bottom: 1px; }
.timeline .now { display: flex; flex-direction: column; background: #0a0a0a; color: #fff; font: bold 9px/10px "Liberation Sans", sans-serif; padding-top: 1px; }
.transport { flex: none; display: flex; align-items: center; width: 245px; padding: 3px 0 0 9px; }
.play { display: flex; flex: 1; margin: 0 2px 0 2px; }
.play button { flex: 1; height: 21px; border: 1px solid #fff; border-right-color: #999; border-bottom-color: #999; }
.play path { fill: #555; }
.play .key { fill: #b83a3a; }
.field { flex: none; width: 54px; height: 18px; padding: 0 0 2px 2px; border: 1px solid #fff; border-top: 2px solid #999; border-left: 2px solid #999; background: #fff; }
.row-range { height: 20px; margin-top: 1px; gap: 2px; align-items: center; }
.row-range > .dots { margin-right: -1px; }
.range { flex: 1; height: 18px; padding: 1px 0 1px 3px; background: #b3b3b3; border: 1px solid #888; border-right-color: #ddd; border-bottom-color: #ddd; }
.range-bar { display: flex; justify-content: space-between; align-items: flex-end; width: 50%; height: 14px; padding: 0 3px 1px 5px; background: #efefef; border-right: 1px solid #888; border-bottom: 1px solid #999; }
.range-bar span { width: 7px; height: 10px; border-right: 1px solid #888; border-bottom: 1px solid #888; }
.drop { flex: none; width: 18px; height: 18px; border-right: 1px solid #999; border-bottom: 1px solid #999; }
.drop-w { width: 20px; }
.set { flex: none; width: 80px; height: 18px; padding: 0 0 2px 1px; appearance: none; white-space: nowrap; border: 1px solid #ddd; border-top: 2px solid #999; border-left: 2px solid #999; }
.row-mel { height: 19px; margin-top: 2px; align-items: stretch; }
.mel-label { width: 40px; text-align: center; font: bold 10px/18px "Open Sans", sans-serif; color: #111; }
.mel-input { flex: 545; min-width: 0; border: 1px solid #fff; border-top: 2px solid #888; border-left: 2px solid #888; background: #fff; }
.mel-output { flex: 536; margin: 0 2px 0 5px; background: #929da9; border-top: 2px solid #777; border-left: 1px solid #777; border-bottom: 1px solid #eee; }
.row-help { height: 18px; margin-top: 1px; }
.help { flex: 1; margin: 0; padding: 2px 0 0 11px; border-top: 1px solid #888; border-left: 1px solid #888; }
```
FILE: script.js
```js
// Perspective projection of the ground plane; u and v run from -1 to 1.
function project(u, v) {
  const w = 1 + 0.0594 * u - 0.242 * v;
  return [(503 + 248 * u - 67 * v) / w, (432.5 - 4.5 * u + 29.5 * v) / w];
}
function segment(u1, v1, u2, v2) {
  return "M" + project(u1, v1).join(" ") + "L" + project(u2, v2).join(" ");
}
const DIVISIONS = 12;
let lines = "";
for (let i = -DIVISIONS; i <= DIVISIONS; i++) {
  if (i === 0) continue;
  const t = i / DIVISIONS;
  lines += segment(t, -1, t, 1) + segment(-1, t, 1, t);
}
document.getElementById("grid-lines").setAttribute("d", lines);
document.getElementById("grid-axes").setAttribute("d", segment(0, -1, 0, 1) + segment(-1, 0, 1, 0));
```
